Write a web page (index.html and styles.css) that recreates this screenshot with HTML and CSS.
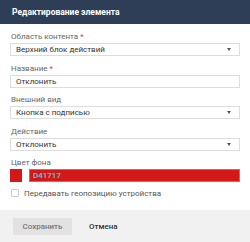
FILE: index.html
```html
<!DOCTYPE html>
<html lang="ru">
<head>
    <meta charset="UTF-8">
    <title>Редактирование элемента</title>
    <link rel="stylesheet" href="styles.css">
</head>
<body>
    <div class="dialog">
        <div class="dialog-header">Редактирование элемента</div>

        <div class="dialog-body">
            <div class="field">
                <label>Область контента <span class="req">*</span></label>
                <div class="select">Верхний блок действий<span class="arrow"></span></div>
            </div>

            <div class="field">
                <label>Название <span class="req">*</span></label>
                <div class="input">Отклонить</div>
            </div>

            <div class="field">
                <label>Внешний вид</label>
                <div class="select">Кнопка с подписью<span class="arrow"></span></div>
            </div>

            <div class="field">
                <label>Действие</label>
                <div class="select">Отклонить<span class="arrow"></span></div>
            </div>

            <div class="field">
                <label>Цвет фона</label>
                <div class="color-row">
                    <div class="swatch"></div>
                    <div class="input color-input">D41717</div>
                </div>
            </div>

            <div class="check">
                <span class="box"></span>
                Передавать геопозицию устройства
            </div>
        </div>

        <div class="dialog-footer">
            <button class="btn-save">Сохранить</button>
            <button class="btn-cancel">Отмена</button>
        </div>
    </div>
</body>
</html>
```

FILE: styles.css
```css
body {
    margin: 0;
    font-family: Roboto, "Noto Sans", sans-serif;
    font-size: 8px;
    color: #333;
    background: #fff;
}
.dialog {
    width: 250px;
    height: 242px;
    display: flex;
    flex-direction: column;
}
.dialog-header {
    height: 24px;
    line-height: 24px;
    padding-left: 12px;
    background-color: #2d3e56;
    color: #fff;
    font-weight: 700;
    font-size: 8.5px;
}
.dialog-body {
    flex: 1;
    padding: 7px 10px 0;
}
.field {
    margin-bottom: 6.5px;
}
.field label {
    display: block;
    height: 12px;
    line-height: 12px;
    color: #666;
    padding-left: 1px;
}
.req {
    color: #e53935;
}
.select, .input {
    position: relative;
    box-sizing: border-box;
    height: 13px;
    line-height: 11px;
    padding-left: 5px;
    border: 1px solid #ddd;
    color: #333;
}
.arrow {
    position: absolute;
    right: 8px;
    top: 4px;
    border-left: 2.5px solid transparent;
    border-right: 2.5px solid transparent;
    border-top: 3px solid #555;
}
.color-row {
    display: flex;
    gap: 7px;
}
.swatch {
    width: 12px;
    height: 13px;
    background-color: #d41717;
}
.color-input {
    flex: 1;
    background-color: #d41717;
    border-color: #e06060;
    color: #4fd2e0;
    font-weight: 500;
    padding-left: 3px;
}
.check {
    display: flex;
    align-items: center;
    gap: 5px;
    margin-top: 6px;
    color: #555;
    padding-left: 1px;
}
.box {
    box-sizing: border-box;
    width: 8px;
    height: 8px;
    border: 1px solid #ccc;
    border-radius: 1px;
}
.dialog-footer {
    height: 32px;
    background-color: #f1f1f1;
    padding: 8px 0 0 13px;
    box-sizing: border-box;
    display: flex;
    align-items: flex-start;
    gap: 17px;
}
button {
    font-family: inherit;
    font-size: 8px;
    border: none;
    cursor: pointer;
}
.btn-save {
    width: 59px;
    height: 17px;
    background-color: #e2e2e2;
    color: #777;
    font-weight: 500;
}
.btn-cancel {
    height: 17px;
    background: none;
    color: #333;
    font-weight: 500;
    padding: 0;
}
```
